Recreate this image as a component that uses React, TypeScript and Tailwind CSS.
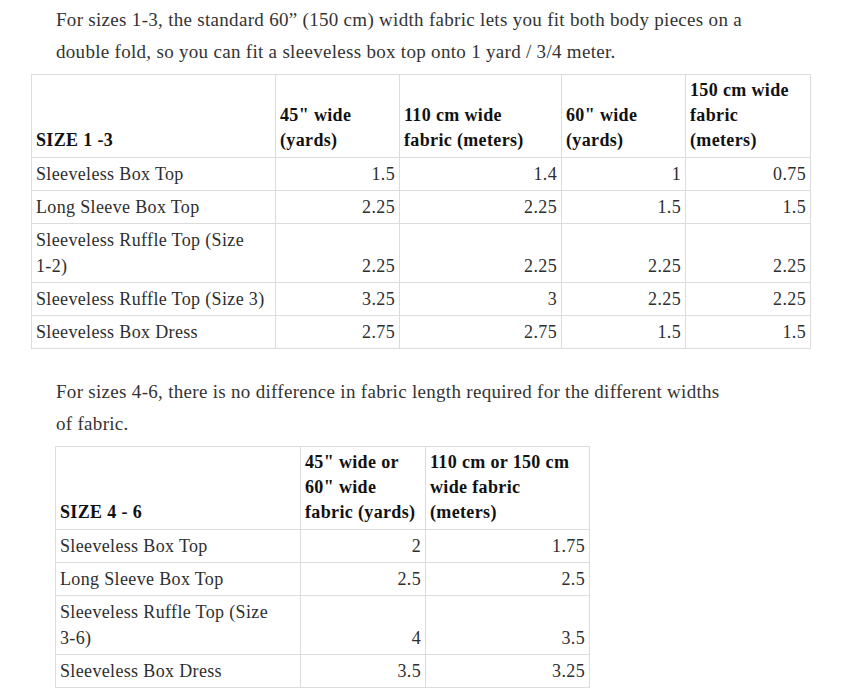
import { Fragment, type ReactNode } from "react";

const serif = "font-['Liberation_Serif',_'Times_New_Roman',_serif]";

type Row = { label: string[]; values: string[] };

const sizeOne: Row[] = [
  { label: ["Sleeveless Box Top"], values: ["1.5", "1.4", "1", "0.75"] },
  { label: ["Long Sleeve Box Top"], values: ["2.25", "2.25", "1.5", "1.5"] },
  { label: ["Sleeveless Ruffle Top (Size", "1-2)"], values: ["2.25", "2.25", "2.25", "2.25"] },
  { label: ["Sleeveless Ruffle Top (Size 3)"], values: ["3.25", "3", "2.25", "2.25"] },
  { label: ["Sleeveless Box Dress"], values: ["2.75", "2.75", "1.5", "1.5"] },
];

const sizeFour: Row[] = [
  { label: ["Sleeveless Box Top"], values: ["2", "1.75"] },
  { label: ["Long Sleeve Box Top"], values: ["2.5", "2.5"] },
  { label: ["Sleeveless Ruffle Top (Size", "3-6)"], values: ["4", "3.5"] },
  { label: ["Sleeveless Box Dress"], values: ["3.5", "3.25"] },
];

// lines are split by hand so they wrap like the original
function Lines({ parts }: { parts: string[] }) {
  return (
    <>
      {parts.map((p, i) => (
        <Fragment key={i}>
          {i > 0 && <br />}
          {p}
        </Fragment>
      ))}
    </>
  );
}

const th =
  "border border-[#dcdcdc] px-[4px] pt-[3px] pb-[4px] text-left align-bottom text-[18px] font-bold leading-[25px] tracking-[0.35px] text-[#111]";
const td =
  "border border-[#dcdcdc] px-[4px] py-[3px] align-bottom text-[18px] leading-[26px] tracking-[0.35px] text-[#2e2e2e]";

function SizeTable({
  title,
  headers,
  widths,
  rows,
  className,
}: {
  title: string;
  headers: string[][];
  widths: string[];
  rows: Row[];
  className: string;
}) {
  return (
    <table className={`table-fixed border-collapse border border-[#dcdcdc] ${className}`}>
      <colgroup>
        {widths.map((w, i) => (
          <col key={i} className={w} />
        ))}
      </colgroup>
      <thead>
        <tr>
          <th className={th}>{title}</th>
          {headers.map((h, i) => (
            <th key={i} className={th}>
              <Lines parts={h} />
            </th>
          ))}
        </tr>
      </thead>
      <tbody>
        {rows.map((r) => (
          <tr key={r.label.join(" ")}>
            <td className={td}>
              <Lines parts={r.label} />
            </td>
            {r.values.map((v, i) => (
              <td key={i} className={`${td} text-right`}>
                {v}
              </td>
            ))}
          </tr>
        ))}
      </tbody>
    </table>
  );
}

function Para({ children, className }: { children: ReactNode; className: string }) {
  return (
    <p className={`pl-[56px] text-[19px] leading-[32px] tracking-[0.3px] text-[#333] ${className}`}>
      {children}
    </p>
  );
}

export default function App() {
  return (
    <div className={`min-h-[700px] w-[847px] bg-white ${serif}`}>
      {/* sizes 1-3 */}
      <Para className="pt-[4px]">
        For sizes 1-3, the standard 60” (150 cm) width fabric lets you fit both body pieces on a
        <br />
        double fold, so you can fit a sleeveless box top onto 1 yard / 3/4 meter.
      </Para>
      <SizeTable
        className="ml-[31px] mt-[6px] w-[779px]"
        title="SIZE 1 -3"
        headers={[
          ['45" wide', "(yards)"],
          ["110 cm wide", "fabric (meters)"],
          ['60" wide', "(yards)"],
          ["150 cm wide", "fabric", "(meters)"],
        ]}
        widths={["w-[244px]", "w-[124px]", "w-[162px]", "w-[124px]", "w-[125px]"]}
        rows={sizeOne}
      />

      {/* sizes 4-6 */}
      <Para className="mt-[27px]">
        For sizes 4-6, there is no difference in fabric length required for the different widths
        <br />
        of fabric.
      </Para>
      <SizeTable
        className="ml-[55px] mt-[6px] w-[534px]"
        title="SIZE 4 - 6"
        headers={[
          ['45" wide or', '60" wide', "fabric (yards)"],
          ["110 cm or 150 cm", "wide fabric", "(meters)"],
        ]}
        widths={["w-[245px]", "w-[125px]", "w-[164px]"]}
        rows={sizeFour}
      />
    </div>
  );
}
